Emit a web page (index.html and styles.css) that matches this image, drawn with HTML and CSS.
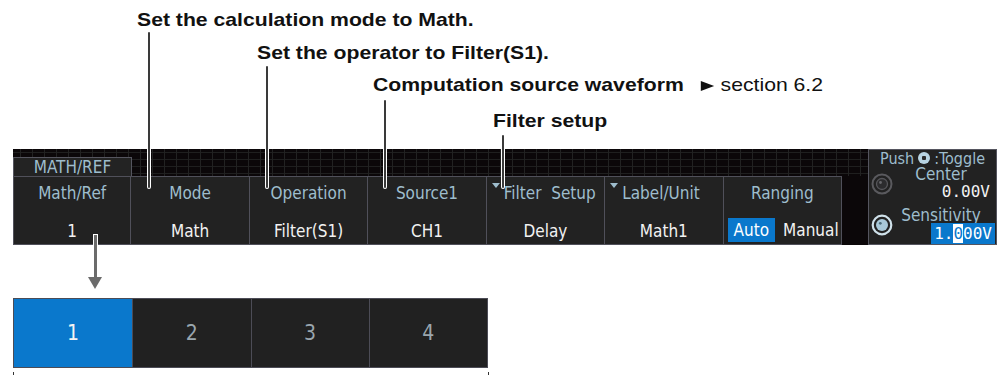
FILE: index.html
```html
<!DOCTYPE html>
<html>
<head>
<meta charset="utf-8">
<link rel="stylesheet" href="styles.css">
</head>
<body>
<div class="page">
  <div class="notes">
    <p class="note n1">Set the calculation mode to Math.</p>
    <p class="note n2">Set the operator to Filter(S1).</p>
    <p class="note n3">Computation source waveform<span class="ref"><i class="tri"></i>section 6.2</span></p>
    <p class="note n4">Filter setup</p>
  </div>

  <div class="screen">
    <div class="left">
      <div class="strip"><div class="tab">MATH/REF</div></div>
      <div class="menu">
        <div class="item"><span class="lbl">Math/Ref</span><span class="val">1</span></div>
        <div class="item"><span class="lbl">Mode</span><span class="val">Math</span></div>
        <div class="item"><span class="lbl">Operation</span><span class="val">Filter(S1)</span></div>
        <div class="item"><span class="lbl">Source1</span><span class="val">CH1</span></div>
        <div class="item"><span class="lbl sub">Filter  Setup</span><span class="val">Delay</span></div>
        <div class="item"><span class="lbl sub">Label/Unit</span><span class="val">Math1</span></div>
        <div class="item"><span class="lbl">Ranging</span><span class="val rng"><span class="on">Auto</span><span>Manual</span></span></div>
        <div class="gap"></div>
      </div>
    </div>
    <div class="panel">
      <div class="push"><span>Push</span><i class="pknob"></i><span>:Toggle</span></div>
      <div class="kb">
        <div class="knob">
          <svg width="22" height="22" viewBox="0 0 22 22"><circle cx="11" cy="11" r="9.5" fill="none" stroke="#5a5a5e" stroke-width="2"/><circle cx="11" cy="11" r="5.5" fill="#2c2c2e" stroke="#56565a" stroke-width="1.3"/><circle cx="9.5" cy="9.5" r="1.4" fill="#66666a"/></svg>
        </div>
        <div class="kc">
          <span class="k-lbl">Center</span>
          <span class="k-val">0.00V</span>
        </div>
      </div>
      <div class="kb kb2">
        <div class="knob">
          <svg width="22" height="22" viewBox="0 0 22 22"><circle cx="11" cy="11" r="9.3" fill="none" stroke="#cfe1ea" stroke-width="2.2"/><circle cx="11" cy="11" r="6" fill="#a8c8d8"/><circle cx="9.3" cy="9.3" r="1.4" fill="#4d6b7a"/></svg>
        </div>
        <div class="kc">
          <span class="k-lbl k-lbl2">Sensitivity</span>
          <span class="k-box">1.<b class="cur">0</b>00V</span>
        </div>
      </div>
    </div>
  </div>

  <div class="spacer"></div>

  <div class="select">
    <div class="opt">1</div>
    <div class="opt">2</div>
    <div class="opt">3</div>
    <div class="opt">4</div>
  </div>
  <div class="ticks"><i></i><i></i></div>

  <span class="leader l1"></span>
  <span class="leader l2"></span>
  <span class="leader l3"></span>
  <span class="leader l4"></span>
  <span class="arrow"></span>
</div>
</body>
</html>
```

FILE: styles.css
```css
* { box-sizing: border-box; }
html, body { margin: 0; padding: 0; background: #fff; }
.page { position: relative; width: 1000px; height: 376px; overflow: hidden; }

/* annotations */
.notes {
  height: 149px;
  padding-top: 10px;
  font-family: "Liberation Sans", Arial, sans-serif;
  font-weight: bold;
  font-size: 19px;
  color: #111;
}
.note {
  margin: 0;
  line-height: 20px;
  white-space: nowrap;
  transform: scaleX(1.115);
  transform-origin: 0 50%;
}
.n1 { margin-left: 137px; }
.n2 { margin-top: 13px; margin-left: 257px; }
.n3 { margin-top: 12px; margin-left: 373px; }
.n4 { margin-top: 16px; margin-left: 493px; }
.ref { font-weight: normal; margin-left: 15px; }
.tri {
  display: inline-block;
  width: 0; height: 0;
  border-left: 12.5px solid #111;
  border-top: 5.5px solid transparent;
  border-bottom: 5.5px solid transparent;
  margin-right: 6px;
}

/* instrument screen */
.screen {
  display: flex;
  margin-left: 13px;
  height: 96px;
  font-family: "DejaVu Sans Condensed", "DejaVu Sans", sans-serif;
  font-stretch: condensed;
}
.left { width: 855px; display: flex; flex-direction: column; }
.strip {
  height: 27px;
  display: flex;
  align-items: flex-end;
  background-color: #0b0709;
  background-image:
    linear-gradient(90deg, #222 1px, transparent 1px),
    linear-gradient(#1f1f1f 1px, transparent 1px);
  background-size: 12px 100%, 100% 7px;
  background-position: 7px 0, 0 3px;
}
.tab {
  width: 119px;
  height: 19px;
  border: 1px solid #55555f;
  border-bottom: 0;
  background: #232323;
  color: #9ebdcd;
  font-size: 17px;
  line-height: 18px;
  text-align: center;
}
.menu {
  height: 69px;
  display: grid;
  grid-template-columns: repeat(7, 1fr) 26px;
  background: #0b0709;
}
.item {
  border: 1px solid #50505a;
  border-left: 0;
  background: #222;
  display: flex;
  flex-direction: column;
}
.item:first-child { border-left: 1px solid #50505a; }
.lbl {
  display: block;
  height: 33px;
  line-height: 33px;
  text-align: center;
  color: #9ebdcd;
  font-size: 17px;
  white-space: pre;
}
.lbl.sub { display: flex; align-items: center; padding-left: 5px; }
.lbl.sub::before {
  content: "";
  align-self: flex-start;
  margin-top: 6px;
  margin-right: 4px;
  border-left: 4.5px solid transparent;
  border-right: 4.5px solid transparent;
  border-top: 5px solid #9ebdcd;
}
.val {
  display: block;
  margin-top: 11px;
  line-height: 20px;
  text-align: center;
  color: #f2f2f2;
  font-size: 17px;
}
.val.rng {
  display: flex;
  gap: 8px;
  margin-top: 8px;
  height: 24px;
  line-height: 24px;
  padding-left: 4px;
}
.on { background: #0a78cc; color: #fff; padding: 0 6px; }
.gap { background: #0b0709; }

/* right panel */
.panel {
  width: 129px;
  height: 96px;
  border: 1px solid #55555f;
  background: #222;
  display: flex;
  flex-direction: column;
}
.push {
  height: 16px;
  display: flex;
  justify-content: center;
  align-items: center;
  gap: 4px;
  font-size: 16px;
  line-height: 15px;
  color: #9ebdcd;
}
.pknob {
  width: 12px; height: 12px;
  border-radius: 50%;
  background: radial-gradient(circle, #2a2a2a 0 2px, #b8d4e2 2.5px);
}
.kb { display: flex; height: 35px; }
.kb2 { height: 43px; }
.knob { width: 25px; display: flex; align-items: center; justify-content: center; }
.kb2 .knob { padding-top: 4px; }
.kc { flex: 1; display: flex; flex-direction: column; }
.k-lbl {
  font-size: 17px;
  line-height: 17px;
  color: #9ebdcd;
  text-align: center;
  padding-right: 8px;
}
.k-lbl2 { padding-top: 5px; line-height: 18px; }
.k-val {
  font-family: "DejaVu Sans Mono", monospace;
  font-size: 16px;
  line-height: 18px;
  color: #f2f2f2;
  text-align: right;
  padding-right: 6px;
}
.k-box {
  align-self: flex-end;
  margin-right: 1px;
  margin-top: -1px;
  height: 21px;
  line-height: 21px;
  padding: 0 3px;
  background: #0a78cc;
  color: #fff;
  font-family: "DejaVu Sans Mono", monospace;
  font-size: 16px;
}
.cur { font-weight: normal; background: #fff; color: #0a78cc; }

/* selection list */
.spacer { height: 53px; }
.select {
  margin-left: 13px;
  width: 475px;
  height: 70px;
  display: grid;
  grid-template-columns: repeat(4, 1fr);
  border: 1px solid #4c4c56;
  background: #212121;
  font-family: "DejaVu Sans Condensed", "DejaVu Sans", sans-serif;
  font-stretch: condensed;
}
.opt {
  display: flex;
  align-items: center;
  justify-content: center;
  border-left: 1px solid #4c4c56;
  color: #9aa6ae;
  font-size: 21px;
}
.opt:first-child { border-left: 0; background: #0a78cc; color: #f4f4f4; }
.ticks {
  margin-left: 13px;
  width: 476px;
  display: flex;
  justify-content: space-between;
  padding-top: 4px;
}
.ticks i { width: 1px; height: 3px; background: #333; }

/* leader lines & arrow (overlay) */
.leader {
  position: absolute;
  width: 2px;
  background: #3a3a3a;
  box-shadow: 0 0 0 1px #fff;
  border-radius: 1px;
}
.l1 { left: 148px; top: 32px; height: 156px; }
.l2 { left: 266px; top: 66px; height: 122px; }
.l3 { left: 384px; top: 100px; height: 88px; }
.l4 { left: 502px; top: 135px; height: 53px; }
.arrow {
  position: absolute;
  left: 94px;
  top: 235px;
  width: 3px;
  height: 44px;
  background: #6b6b6b;
  box-shadow: 0 0 0 1px #fff;
}
.arrow::after {
  content: "";
  position: absolute;
  left: -6px;
  top: 42px;
  border-left: 7.5px solid transparent;
  border-right: 7.5px solid transparent;
  border-top: 12px solid #6b6b6b;
}
```
